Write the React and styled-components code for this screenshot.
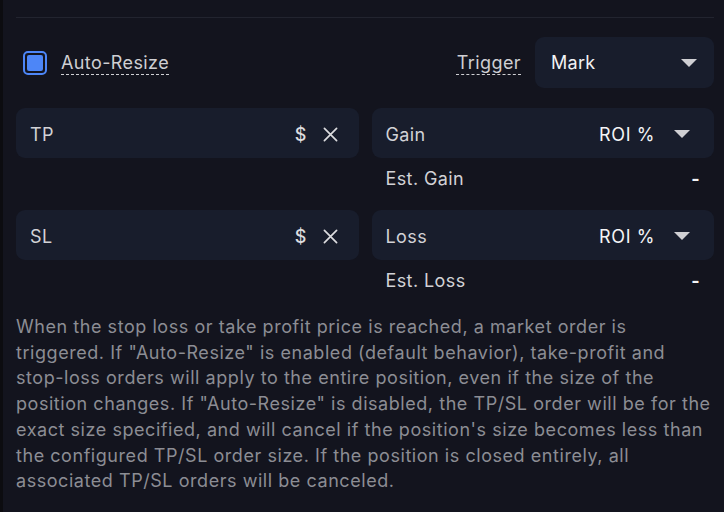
import React, { useState } from 'react'
import styled, { createGlobalStyle } from 'styled-components'

const GlobalStyle = createGlobalStyle`
    html, body {
        margin: 0;
        padding: 0;
        background: #0c0c10;
    }
    body {
        font-family: Inter, "Noto Sans", sans-serif;
        -webkit-font-smoothing: antialiased;
    }
`;

const Page = styled.div`
    width: 724px;
    height: 512px;
    display: flex;
    overflow: hidden;
`;

const Panel = styled.div`
    flex: 1;
    margin-left: 3px;
    padding: 17px 10px 0 13px;
    background: #13141e;
    display: flex;
    flex-direction: column;
`;

const Divider = styled.div`
    height: 1px;
    background: #22242f;
`;

const TopRow = styled.div`
    margin-top: 19px;
    display: flex;
    align-items: center;
    justify-content: space-between;
`;

const CheckLabel = styled.label`
    display: flex;
    align-items: center;
    gap: 14px;
    padding-left: 7px;
    cursor: pointer;
`;

const Box = styled.span`
    width: 24px;
    height: 24px;
    box-sizing: border-box;
    border: 2px solid #4d86f7;
    border-radius: 5px;
    padding: 2px;
    display: flex;
    & > span {
        flex: 1;
        border-radius: 2px;
        background: ${({checked}) => checked ? '#4d86f7' : 'transparent'};
    }
`;

const Dashed = styled.span`
    color: #cfcfd3;
    font-size: 18px;
    letter-spacing: 0.4px;
    line-height: 24px;
    text-decoration: underline dashed #cfcfd3;
    text-decoration-thickness: 1px;
    text-underline-offset: 5px;
`;

const TriggerGroup = styled.div`
    display: flex;
    align-items: center;
    gap: 14px;
`;

const Select = styled.div`
    width: ${({w}) => w || 'auto'};
    height: 51px;
    box-sizing: border-box;
    padding: 0 17px 0 16px;
    background: #181d2c;
    border-radius: 9px;
    display: flex;
    align-items: center;
    justify-content: space-between;
    color: #f2f2f4;
    font-size: 18px;
    letter-spacing: 0.3px;
`;

const Caret = styled.span`
    width: 0;
    height: 0;
    border-left: 8px solid transparent;
    border-right: 8px solid transparent;
    border-top: 8px solid #cfcfd3;
`;

const Grid = styled.div`
    margin-top: 20px;
    display: grid;
    grid-template-columns: 1fr 1fr;
    column-gap: 13px;
    row-gap: 12px;
`;

const Cell = styled.div`
    display: flex;
    flex-direction: column;
`;

const Field = styled.div`
    height: 50px;
    box-sizing: border-box;
    padding: 2px ${({end}) => end || 21}px 0 14px;
    background: #181d2c;
    border-radius: 9px;
    display: flex;
    align-items: center;
    gap: 16px;
`;

const FieldLabel = styled.span`
    flex: 1;
    color: #d2d2d6;
    font-size: 18px;
    letter-spacing: 0.4px;
`;

const Unit = styled.span`
    color: #dcdcdf;
    font-size: 18px;
    font-weight: 500;
`;

const Value = styled.span`
    color: #f4f4f6;
    font-size: 18px;
    letter-spacing: 0.6px;
    margin-right: 3px;
`;

const EstRow = styled.div`
    height: 40px;
    padding: 0 14px;
    display: flex;
    align-items: center;
    justify-content: space-between;
    color: #d2d2d6;
    font-size: 18px;
    letter-spacing: 0.4px;
    & b {
        color: #f4f4f6;
        font-weight: 700;
    }
`;

const Note = styled.p`
    margin: 14px 0 0;
    color: #8c8d94;
    font-size: 18px;
    letter-spacing: 0.55px;
    line-height: 25.7px;
`;

function ClearIcon() {
    return (
        <svg width="15" height="15" viewBox="0 0 16 16" fill="none" stroke="#dcdcdf" strokeWidth="1.8" strokeLinecap="round">
            <path d="M1.5 1.5L14.5 14.5M14.5 1.5L1.5 14.5"/>
        </svg>
    );
}

export default function App() {
    const [autoResize, setAutoResize] = useState(true);

    return (
        <>
            <GlobalStyle/>
            <Page>
                <Panel>
                    <Divider/>
                    <TopRow>
                        <CheckLabel onClick={() => setAutoResize(!autoResize)}>
                            <Box checked={autoResize}><span/></Box>
                            <Dashed>Auto-Resize</Dashed>
                        </CheckLabel>
                        <TriggerGroup>
                            <Dashed>Trigger</Dashed>
                            <Select w="179px">
                                Mark
                                <Caret/>
                            </Select>
                        </TriggerGroup>
                    </TopRow>

                    <Grid>
                        <Cell>
                            <Field>
                                <FieldLabel>TP</FieldLabel>
                                <Unit>$</Unit>
                                <ClearIcon/>
                            </Field>
                        </Cell>
                        <Cell>
                            <Field end={24}>
                                <FieldLabel>Gain</FieldLabel>
                                <Value>ROI %</Value>
                                <Caret/>
                            </Field>
                            <EstRow>Est. Gain <b>-</b></EstRow>
                        </Cell>
                        <Cell>
                            <Field>
                                <FieldLabel>SL</FieldLabel>
                                <Unit>$</Unit>
                                <ClearIcon/>
                            </Field>
                        </Cell>
                        <Cell>
                            <Field end={24}>
                                <FieldLabel>Loss</FieldLabel>
                                <Value>ROI %</Value>
                                <Caret/>
                            </Field>
                            <EstRow>Est. Loss <b>-</b></EstRow>
                        </Cell>
                    </Grid>

                    <Note>
                        When the stop loss or take profit price is reached, a market order is triggered. If "Auto-Resize" is enabled (default behavior), take-profit and stop-loss orders will apply to the entire position, even if the size of the position changes. If "Auto-Resize" is disabled, the TP/SL order will be for the exact size specified, and will cancel if the position's size becomes less than the configured TP/SL order size. If the position is closed entirely, all associated TP/SL orders will be canceled.
                    </Note>
                </Panel>
            </Page>
        </>
    );
}
